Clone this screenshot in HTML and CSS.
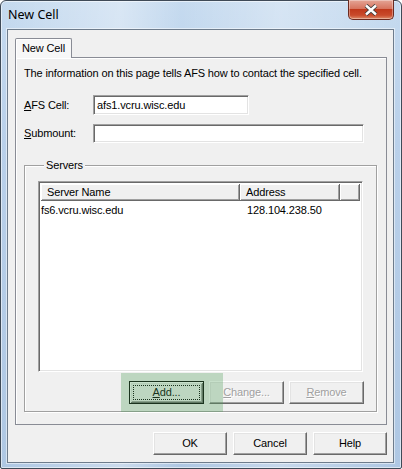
FILE: index.html
```html
<!DOCTYPE html>
<html>
<head>
<meta charset="utf-8">
<link rel="stylesheet" href="styles.css">
</head>
<body>
<div class="window">
  <div class="titlebar">
    <span class="title">New Cell</span>
    <div class="close">
      <svg width="16" height="12" viewBox="0 0 16 12"><path d="M3 1.5 L13 10.5 M13 1.5 L3 10.5" stroke="#3b3b3b" stroke-width="4.2" stroke-linecap="butt"/><path d="M3 1.5 L13 10.5 M13 1.5 L3 10.5" stroke="#ffffff" stroke-width="2.4"/></svg>
    </div>
  </div>
  <div class="client">
    <div class="tabs">
      <div class="tab">New Cell</div>
    </div>
    <div class="panel">
      <p class="intro">The information on this page tells AFS how to contact the specified cell.</p>
      <div class="field">
        <label class="lbl"><u>A</u>FS Cell:</label>
        <div class="input short">afs1.vcru.wisc.edu</div>
      </div>
      <div class="field">
        <label class="lbl"><u>S</u>ubmount:</label>
        <div class="input long"></div>
      </div>
      <fieldset class="group">
        <legend>Servers</legend>
        <div class="listview">
          <div class="header">
            <div class="hcol c1">Server Name</div>
            <div class="hcol c2">Address</div>
            <div class="hcol c3"></div>
          </div>
          <div class="row">
            <div class="cell c1">fs6.vcru.wisc.edu</div>
            <div class="cell c2">128.104.238.50</div>
          </div>
        </div>
        <div class="grpbtns">
          <div class="btn default"><span class="focus"><u>A</u>dd...</span></div>
          <div class="btn disabled"><u>C</u>hange...</div>
          <div class="btn disabled"><u>R</u>emove</div>
          <div class="highlight"></div>
        </div>
      </fieldset>
    </div>
    <div class="dlgbtns">
      <div class="btn">OK</div>
      <div class="btn">Cancel</div>
      <div class="btn">Help</div>
    </div>
  </div>
</div>
</body>
</html>
```

FILE: styles.css
```css
* { box-sizing: border-box; }
html, body { margin: 0; padding: 0; }
body {
  width: 402px;
  height: 469px;
  overflow: hidden;
  background: #ffffff;
  font-family: "Liberation Sans", Arial, sans-serif;
  font-size: 11px;
  letter-spacing: -0.13px;
  color: #000;
}
.window {
  width: 402px;
  height: 469px;
  border: 1px solid #3f4a57;
  border-radius: 6px 6px 2px 2px;
  background:
    linear-gradient(90deg, rgba(255,255,255,0) 0, rgba(255,255,255,0.35) 30%, rgba(255,255,255,0) 45%, rgba(255,255,255,0.3) 70%, rgba(255,255,255,0) 100%),
    linear-gradient(180deg, #c5daef 0, #b9d0ea 30%, #aec7e3 100%);
  display: flex;
  flex-direction: column;
  box-shadow: inset 0 0 0 1px rgba(255,255,255,0.55);
}
.titlebar {
  height: 28px;
  display: flex;
  align-items: flex-start;
}
.title {
  font-family: "Noto Sans", "Open Sans", sans-serif;
  font-size: 12.5px;
  letter-spacing: 0;
  padding: 5px 0 0 7px;
  color: #000;
}
.close {
  margin-left: auto;
  margin-right: 7px;
  margin-top: -1px;
  width: 46px;
  height: 20px;
  border: 1px solid #6b2a1f;
  border-top: none;
  border-radius: 0 0 5px 5px;
  background: linear-gradient(180deg, #e4a596 0, #d7755f 45%, #c0391c 50%, #c94a2b 80%, #dd8a68 100%);
  box-shadow: inset 0 0 0 1px rgba(255,255,255,0.35);
  display: flex;
  align-items: center;
  justify-content: center;
}
.client {
  margin: 0 7px 0 6px;
  height: 434px;
  border: 1px solid #6e7c8c;
  box-shadow: 0 0 0 1px rgba(255,255,255,0.5);
  background: #f0f0f0;
  padding: 8px 6px 0 7px;
  display: flex;
  flex-direction: column;
}
.tabs {
  display: flex;
  height: 19px;
  position: relative;
  z-index: 1;
}
.tab {
  width: 57px;
  height: 20px;
  border: 1px solid #898c95;
  border-bottom: none;
  border-radius: 2px 2px 0 0;
  background: #f7f7f7;
  padding: 3px 0 0 6px;
  box-shadow: inset 1px 1px 0 #ffffff;
}
.panel {
  height: 368px;
  border: 1px solid #898c95;
  background: #f0f0f0;
  padding: 9px 9px 0 8px;
  box-shadow: inset 1px 1px 0 #ffffff;
}
.intro {
  margin: 0 0 15px 0;
  line-height: 13px;
}
.field {
  display: flex;
  align-items: center;
  height: 20px;
  margin-bottom: 8px;
}
.lbl {
  width: 69px;
}
.input {
  height: 20px;
  background: #fff;
  border: 1px solid;
  border-color: #a0a0a0 #fff #fff #a0a0a0;
  box-shadow: inset 1px 1px 0 #696969, inset -1px -1px 0 #e3e3e3;
  padding: 3px 0 0 3px;
  line-height: 13px;
}
.short { width: 156px; }
.long { width: 271px; height: 19px; }
.group {
  margin: 16px 0 0 0;
  width: 353px;
  height: 253px;
  border: 1px solid #a0a0a0;
  box-shadow: inset 1px 1px 0 #fff, 1px 1px 0 #fff;
  padding: 9px 13px 0 13px;
  position: relative;
}
.group legend {
  padding: 0 2px;
  margin-left: 6px;
  background: #f0f0f0;
  line-height: 13px;
}
.listview {
  width: 325px;
  height: 191px;
  background: #fff;
  border: 1px solid;
  border-color: #a0a0a0 #fff #fff #a0a0a0;
  box-shadow: inset 1px 1px 0 #696969, inset -1px -1px 0 #e3e3e3;
  padding: 2px;
}
.header {
  display: flex;
  height: 17px;
}
.hcol {
  height: 17px;
  background: #f0f0f0;
  border-right: 1px solid #696969;
  border-bottom: 1px solid #696969;
  box-shadow: inset 1px 1px 0 #fff, inset -1px -1px 0 #a0a0a0;
  padding: 2px 0 0 6px;
  line-height: 13px;
}
.c1 { width: 199px; }
.c2 { width: 100px; }
.c3 { flex: 1; }
.row {
  display: flex;
  padding-top: 3px;
  line-height: 13px;
}
.row .c1 { padding-left: 0; }
.row .c2 { padding-left: 7px; }
.grpbtns {
  position: relative;
  display: flex;
  justify-content: flex-end;
  gap: 5px;
  margin-top: 9px;
  margin-right: -1px;
}
.btn {
  width: 75px;
  height: 23px;
  background: #f0f0f0;
  border: 1px solid;
  border-color: #fff #696969 #696969 #fff;
  box-shadow: inset -1px -1px 0 #a0a0a0, inset 1px 1px 0 #e3e3e3;
  display: flex;
  align-items: center;
  justify-content: center;
  line-height: 13px;
}
.btn.disabled {
  color: #a0a0a0;
  text-shadow: 1px 1px 0 #fff;
}
.btn.default {
  border: 1px solid #000;
  box-shadow: inset 1px 1px 0 #fff, inset -1px -1px 0 #696969, inset 2px 2px 0 #e3e3e3, inset -2px -2px 0 #a0a0a0;
}
.focus {
  width: 67px;
  height: 15px;
  border: 1px dotted #000;
  display: flex;
  align-items: center;
  justify-content: center;
}
.highlight {
  position: absolute;
  left: 83px;
  top: -8px;
  width: 102px;
  height: 39px;
  background: rgba(80, 160, 90, 0.32);
}
.dlgbtns {
  display: flex;
  justify-content: flex-end;
  gap: 6px;
  margin-top: 7px;
}
.dlgbtns .btn {
  width: 74px;
}
```
